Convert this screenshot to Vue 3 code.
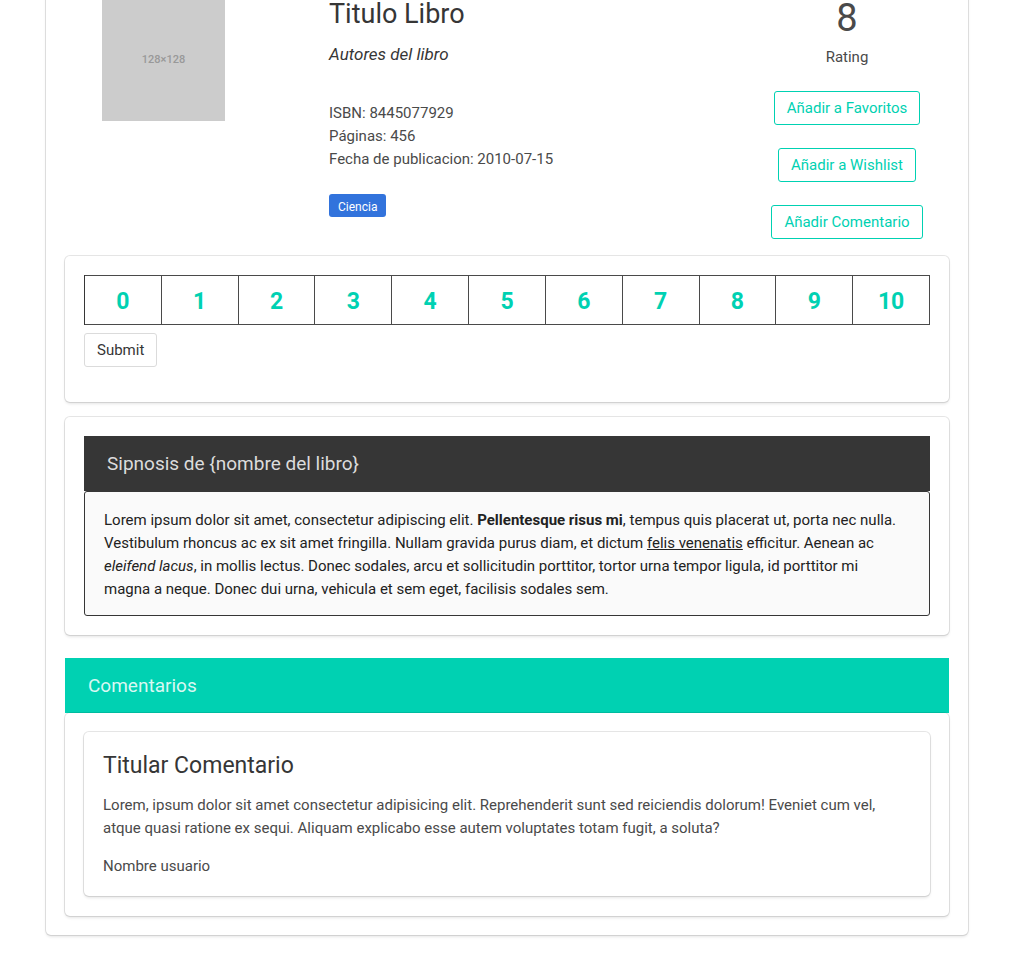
<script setup>
import { ref } from 'vue'

const scores = Array.from({ length: 11 }, (_, i) => i)
const chosen = ref(null)
const actions = ['Añadir a Favoritos', 'Añadir a Wishlist', 'Añadir Comentario']
</script>

<template>
  <main class="page">
    <article class="box book">
      <section class="summary">
        <div class="cover" role="img" aria-label="128×128"><span>128×128</span></div>
        <div class="details">
          <h1>Titulo Libro</h1>
          <h2>Autores del libro</h2>
          <p>ISBN: 8445077929<br />Páginas: 456<br />Fecha de publicacion: 2010-07-15</p>
          <span class="tag">Ciencia</span>
        </div>
        <div class="side">
          <p class="score">8</p>
          <p class="caption">Rating</p>
          <button v-for="action in actions" :key="action" type="button" class="button outlined">{{ action }}</button>
        </div>
      </section>

      <form class="box vote" @submit.prevent>
        <div class="scale" role="radiogroup" aria-label="Rating">
          <label v-for="n in scores" :key="n" class="cell">
            <input v-model="chosen" type="radio" name="rating" :value="n" />
            <span>{{ n }}</span>
          </label>
        </div>
        <button type="submit" class="button">Submit</button>
      </form>

      <section class="box synopsis">
        <h2 class="banner dark">Sipnosis de {nombre del libro}</h2>
        <p class="message">
          Lorem ipsum dolor sit amet, consectetur adipiscing elit. <strong>Pellentesque risus mi</strong>, tempus quis
          placerat ut, porta nec nulla. Vestibulum rhoncus ac ex sit amet fringilla. Nullam gravida purus diam, et dictum
          <a href="#felis">felis venenatis</a> efficitur. Aenean ac <em>eleifend lacus</em>, in mollis lectus. Donec
          sodales, arcu et sollicitudin porttitor, tortor urna tempor ligula, id porttitor mi magna a neque. Donec dui
          urna, vehicula et sem eget, facilisis sodales sem.
        </p>
      </section>

      <section class="comments">
        <h2 class="banner primary">Comentarios</h2>
        <div class="box thread">
          <article class="box comment">
            <h3>Titular Comentario</h3>
            <p>
              Lorem, ipsum dolor sit amet consectetur adipisicing elit. Reprehenderit sunt sed reiciendis dolorum! Eveniet
              cum vel, atque quasi ratione ex sequi. Aliquam explicabo esse autem voluptates totam fugit, a soluta?
            </p>
            <p>Nombre usuario</p>
          </article>
        </div>
      </section>
    </article>
  </main>
</template>

<style>
body {
  margin: 0;
  background: #fff;
}
</style>

<style scoped>
* {
  box-sizing: border-box;
}
.page {
  display: flow-root;
  padding: 0 68px 19px 46px;
  color: #4a4a4a;
  font: 15px/23px Roboto, 'Open Sans', sans-serif;
}
h1,
h2,
h3,
p {
  margin: 0;
  font-weight: 400;
}
.box {
  padding: 19px;
  border-radius: 5px;
  background: #fff;
  box-shadow: 0 2px 3px rgba(10, 10, 10, 0.1), 0 0 0 1px rgba(10, 10, 10, 0.1);
}
.book {
  margin-top: -21px;
}
.summary {
  display: grid;
  grid-template-columns: 264fr 416fr 204fr;
}
.cover {
  display: grid;
  place-items: center;
  width: 123px;
  height: 123px;
  margin-left: 37px;
  background: #ccc;
  color: #999;
  font: 500 11px/12px Roboto, sans-serif;
}
.details {
  display: flex;
  flex-direction: column;
  align-items: flex-start;
}
.details h1 {
  color: #363636;
  font-size: 27px;
  line-height: 32px;
}
.details h2 {
  margin: 13px 0 36px;
  color: #363636;
  font-size: 17px;
  line-height: 23px;
  font-style: italic;
}
.tag {
  margin-top: 23px;
  padding: 3px 9px 0;
  border-radius: 3px;
  background: #3273dc;
  color: #fff;
  font-size: 12px;
  line-height: 20px;
}
.side {
  display: flex;
  flex-direction: column;
  align-items: center;
}
.score {
  font-size: 38px;
  line-height: 40px;
}
.caption {
  margin: 8px 0 22px;
}
.button {
  height: 34px;
  padding: 0 12px;
  border: 1px solid #dbdbdb;
  border-radius: 3px;
  background: #fff;
  color: #363636;
  font: inherit;
  cursor: pointer;
}
.outlined {
  margin-bottom: 23px;
  border-color: #00d1b2;
  color: #00d1b2;
}
.outlined:last-child {
  margin-bottom: 17px;
}
.vote {
  padding-bottom: 35px;
}
.scale {
  display: grid;
  grid-template-columns: repeat(11, 1fr);
  margin-bottom: 8px;
  border-left: 1px solid #363636;
}
.cell {
  position: relative;
  display: grid;
  place-items: center;
  height: 50px;
  padding-top: 2px;
  border: 1px solid #4a4a4a;
  border-left: 0;
  color: #00d1b2;
  font-size: 23px;
  font-weight: 700;
  cursor: pointer;
}
.cell input {
  position: absolute;
  inset: 0;
  margin: 0;
  opacity: 0;
}
.synopsis {
  margin-top: 15px;
}
.banner {
  padding: 16px 23px;
  font-size: 19px;
  line-height: 23px;
}
.dark {
  background: #363636;
  color: #dcdcdc;
}
.primary {
  background: #00d1b2;
  color: #d9f8f3;
}
.message {
  padding: 17px 27px 14px 19px;
  border: 1px solid #363636;
  border-radius: 3px;
  background: #fafafa;
  color: #222;
}
.message a {
  color: inherit;
  text-decoration: underline;
}
.comments {
  margin-top: 23px;
}
.thread {
  padding-bottom: 20px;
}
.comment {
  padding: 21px 19px 18px;
}
.comment h3 {
  margin-bottom: 15px;
  color: #363636;
  font-size: 23px;
  line-height: 26px;
}
.comment p + p {
  margin-top: 15px;
}
</style>
